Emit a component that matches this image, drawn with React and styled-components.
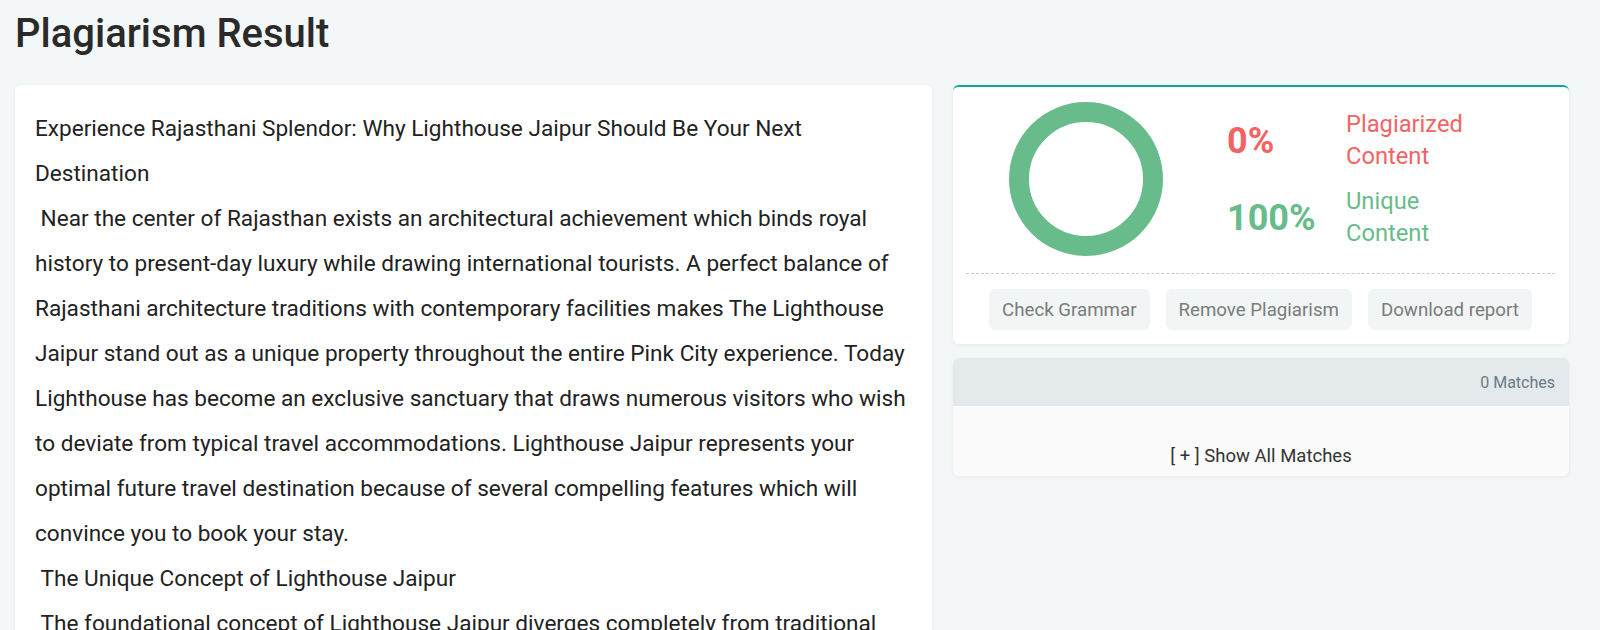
import React from 'react';
import styled, { createGlobalStyle } from 'styled-components';

const GlobalStyle = createGlobalStyle`
  * {
    box-sizing: border-box;
  }
  body {
    margin: 0;
    background: #f4f7f8;
    font-family: Roboto, 'Liberation Sans', sans-serif;
    overflow: hidden;
  }
`;

const Page = styled.div`
  padding: 8px 31px 0 15px;
`;

const Title = styled.h1`
  margin: 0;
  font-size: 40px;
  font-weight: 500;
  line-height: 52px;
  color: #2a2a2a;
`;

const Columns = styled.div`
  display: grid;
  grid-template-columns: 917fr 616fr;
  gap: 21px;
  margin-top: 25px;
  align-items: start;
`;

const Card = styled.div`
  background: #fff;
  border-radius: 6px;
  box-shadow: 0 1px 4px rgba(0, 0, 0, 0.06);
`;

const TextCard = styled(Card)`
  padding: 21px 20px;
  font-size: 22.6px;
  line-height: 45px;
  color: #222;
  white-space: pre-wrap;
  min-height: 700px;
`;

const Side = styled.div`
  display: flex;
  flex-direction: column;
  gap: 14px;
`;

const ResultCard = styled(Card)`
  border-top: 2px solid #14a39c;
  padding: 15px 14px 14px 13px;
`;

const Summary = styled.div`
  display: flex;
  align-items: center;
  gap: 64px;
  padding-left: 43px;
`;

const Stats = styled.div`
  display: grid;
  grid-template-columns: 119px auto;
  row-gap: 14px;
  align-items: center;
`;

const Percent = styled.div`
  font-size: 36px;
  font-weight: 700;
  color: ${(p) => p.$color};
`;

const Label = styled.div`
  font-size: 23.7px;
  line-height: 31.5px;
  color: ${(p) => p.$color};
  width: 110px;
`;

const Divider = styled.div`
  border-top: 1px dashed #c9cccd;
  margin-top: 17px;
`;

const Actions = styled.div`
  display: flex;
  justify-content: center;
  gap: 16px;
  margin-top: 15px;
`;

const ActionButton = styled.button`
  height: 41px;
  padding: 0 13px;
  border: none;
  border-radius: 6px;
  background: #f2f5f6;
  color: #7b7b7b;
  font-family: inherit;
  font-size: 18.7px;
`;

const MatchesCard = styled(Card)`
  overflow: hidden;
  background: #fbfbfb;
`;

const MatchesHeader = styled.div`
  height: 48px;
  background: #e4e9eb;
  display: flex;
  align-items: center;
  justify-content: flex-end;
  padding-right: 14px;
  font-size: 16px;
  color: #697c84;
`;

const MatchesBody = styled.div`
  height: 70px;
  display: flex;
  align-items: flex-end;
  justify-content: center;
  padding-bottom: 9px;
  font-size: 18.5px;
  color: #333;
`;

const Ring = () => (
  <svg width="154" height="154" viewBox="0 0 154 154">
    <circle cx="77" cy="77" r="67" fill="none" stroke="#68bb8a" strokeWidth="20" />
  </svg>
);

const text = `Experience Rajasthani Splendor: Why Lighthouse Jaipur Should Be Your Next Destination
 Near the center of Rajasthan exists an architectural achievement which binds royal history to present-day luxury while drawing international tourists. A perfect balance of Rajasthani architecture traditions with contemporary facilities makes The Lighthouse Jaipur stand out as a unique property throughout the entire Pink City experience. Today Lighthouse has become an exclusive sanctuary that draws numerous visitors who wish to deviate from typical travel accommodations. Lighthouse Jaipur represents your optimal future travel destination because of several compelling features which will convince you to book your stay.
 The Unique Concept of Lighthouse Jaipur
 The foundational concept of Lighthouse Jaipur diverges completely from traditional hotel designs.`;

export default function App() {
  return (
    <>
      <GlobalStyle />
      <Page>
        <Title>Plagiarism Result</Title>
        <Columns>
          <TextCard>{text}</TextCard>
          <Side>
            <ResultCard>
              <Summary>
                <Ring />
                <Stats>
                  <Percent $color="#f26464">0%</Percent>
                  <Label $color="#f26464">Plagiarized Content</Label>
                  <Percent $color="#68bb8a">100%</Percent>
                  <Label $color="#68bb8a">Unique Content</Label>
                </Stats>
              </Summary>
              <Divider />
              <Actions>
                <ActionButton>Check Grammar</ActionButton>
                <ActionButton>Remove Plagiarism</ActionButton>
                <ActionButton>Download report</ActionButton>
              </Actions>
            </ResultCard>
            <MatchesCard>
              <MatchesHeader>0 Matches</MatchesHeader>
              <MatchesBody>[ + ] Show All Matches</MatchesBody>
            </MatchesCard>
          </Side>
        </Columns>
      </Page>
    </>
  );
}
